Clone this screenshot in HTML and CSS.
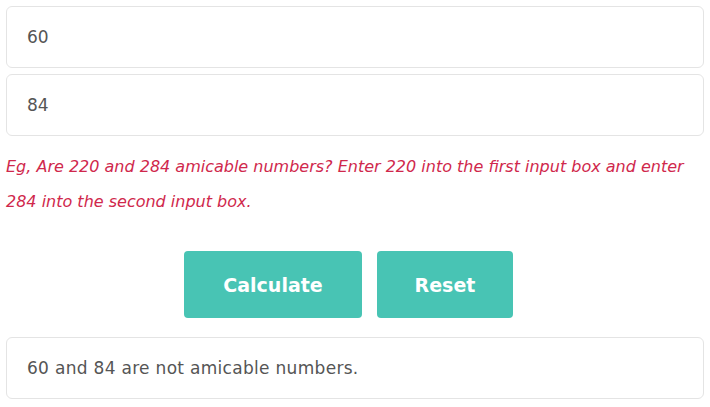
FILE: index.html
```html
<!DOCTYPE html>
<html lang="en">
<head>
  <meta charset="UTF-8" />
  <meta name="viewport" content="width=device-width, initial-scale=1.0"/>
  <title>Amicable Numbers Calculator</title>
  <link rel="stylesheet" href="styles.css">
</head>
<body>

  <div class="calc">
    <input class="field" type="text" value="60" id="first">
    <input class="field" type="text" value="84" id="second">

    <p class="hint">Eg, Are 220 and 284 amicable numbers? Enter 220 into the first input box and enter 284 into the second input box.</p>

    <div class="actions">
      <button class="btn">Calculate</button>
      <button class="btn btn-reset">Reset</button>
    </div>

    <div class="result">60 and 84 are not amicable numbers.</div>
  </div>

</body>
</html>
```

FILE: styles.css
```css
body {
  font-family: "DejaVu Sans", sans-serif;
  margin: 0;
  padding: 6px;
  background-color: #fff;
  color: #555;
}
.calc {
  display: flex;
  flex-direction: column;
}
.field {
  box-sizing: border-box;
  height: 62px;
  padding: 0 20px;
  margin-bottom: 6px;
  font-family: inherit;
  font-size: 17px;
  color: #555;
  border: 1px solid #e4e4e4;
  border-radius: 6px;
  outline: none;
}
.hint {
  margin: 7px 0 0;
  font-size: 16px;
  font-style: italic;
  line-height: 35px;
  color: #d0284c;
}
.actions {
  display: flex;
  justify-content: center;
  gap: 15px;
  margin: 32px 0 19px;
  padding-right: 13px;
}
.btn {
  height: 67px;
  width: 178px;
  font-family: inherit;
  font-size: 19px;
  font-weight: 600;
  color: #fff;
  background-color: #48c4b4;
  border: none;
  border-radius: 4px;
  cursor: pointer;
}
.btn-reset {
  width: 136px;
}
.result {
  box-sizing: border-box;
  height: 62px;
  display: flex;
  align-items: center;
  padding: 0 20px;
  font-size: 17px;
  letter-spacing: 0.3px;
  border: 1px solid #e4e4e4;
  border-radius: 6px;
}
```
